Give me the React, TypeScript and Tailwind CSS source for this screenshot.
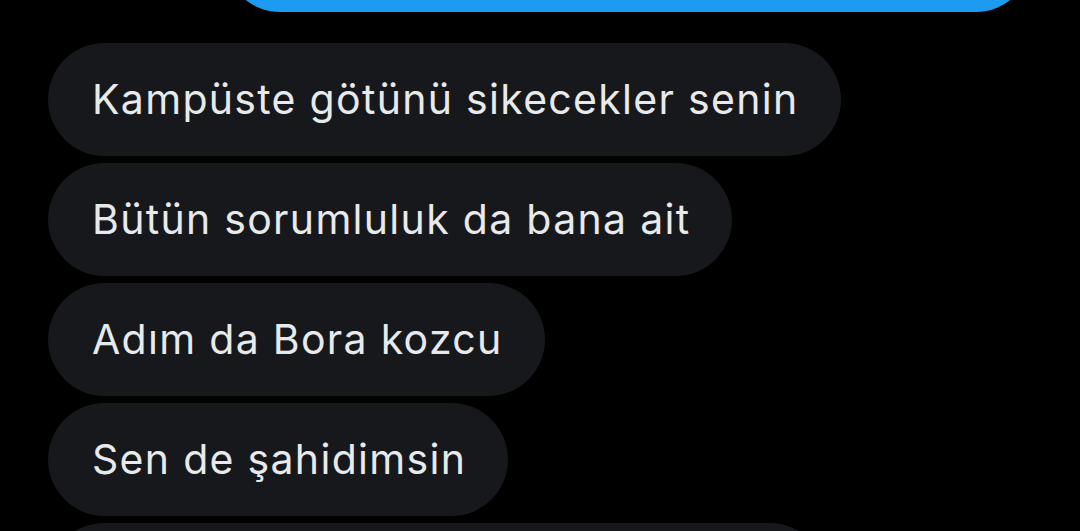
export default function App() {
  const messages = [
    "Kampüste götünü sikecekler senin",
    "Bütün sorumluluk da bana ait",
    "Adım da Bora kozcu",
    "Sen de şahidimsin",
  ];
  return (
    <div className="w-[1080px] h-[531px] overflow-hidden bg-black">
      <div className="flex flex-col gap-[7px] px-[48px] mt-[-101px]">
        <div className="self-end w-[808px] h-[113px] mb-[24px] rounded-full bg-[#1d9bf0]" />
        {messages.map((m) => (
          <div
            key={m}
            className="self-start h-[113px] flex items-center rounded-full bg-[#16181c] pl-[44px] pr-[42px] text-[#e7e9ea] text-[41px] tracking-[1.3px] whitespace-nowrap"
            style={{ fontFamily: "Inter, 'Noto Sans', sans-serif" }}
          >
            {m}
          </div>
        ))}
        <div className="self-start w-[778px] h-[113px] rounded-full bg-[#16181c]" />
      </div>
    </div>
  );
}
